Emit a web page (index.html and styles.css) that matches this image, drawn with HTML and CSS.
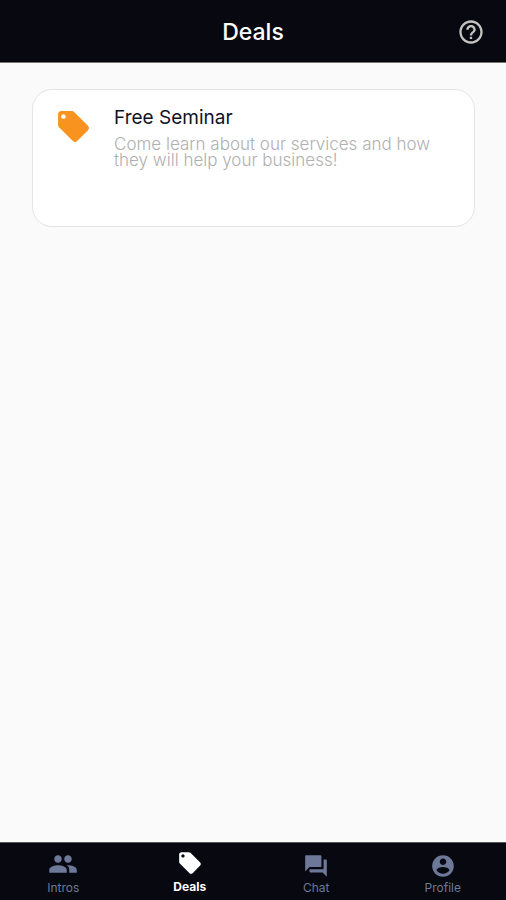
FILE: index.html
```html
<!DOCTYPE html>
<html lang="en">
<head>
<meta charset="utf-8">
<meta name="viewport" content="width=device-width, initial-scale=1">
<title>Deals</title>
<link rel="stylesheet" href="styles.css">
</head>
<body>
<header class="topbar">
  <h1 class="topbar-title">Deals</h1>
  <button class="help" type="button" aria-label="Help">
    <svg class="icon-help" viewBox="0 0 24 24" aria-hidden="true"><path d="M11 18h2v-2h-2v2zm1-16C6.48 2 2 6.48 2 12s4.480 10 10 10 10-4.480 10-10S17.520 2 12 2zm0 18c-4.410 0-8-3.590-8-8s3.590-8 8-8 8 3.590 8 8-3.590 8-8 8zm0-14c-2.210 0-4 1.790-4 4h2c0-1.100.9-2 2-2s2 .9 2 2c0 2-3 1.750-3 5h2c0-2.250 3-2.500 3-5 0-2.210-1.790-4-4-4z"/></svg>
  </button>
</header>
<main class="content">
  <article class="card">
    <svg class="icon-tag" viewBox="0 0 24 24" aria-hidden="true"><path d="M21.410 11.580l-9-9C12.050 2.220 11.550 2 11 2H4c-1.100 0-2 .9-2 2v7c0 .55.22 1.050.59 1.420l9 9c.36.36.86.58 1.410.58.55 0 1.050-.22 1.410-.59l7-7c.37-.36.59-.86.59-1.410 0-.55-.23-1.060-.59-1.420zM5.500 7C4.670 7 4 6.330 4 5.500S4.670 4 5.500 4 7 4.670 7 5.500 6.330 7 5.500 7z"/></svg>
    <div class="card-text">
      <h2 class="card-title">Free Seminar</h2>
      <p class="card-description">Come learn about our services and how they will help your business!</p>
    </div>
  </article>
</main>
<nav class="tabs" aria-label="Main">
  <a class="tab" href="#intros">
    <svg class="icon-people" viewBox="0 0 24 24" aria-hidden="true"><path d="M16 11c1.660 0 2.990-1.340 2.990-3S17.660 5 16 5s-3 1.340-3 3 1.340 3 3 3zm-8 0c1.660 0 2.990-1.340 2.990-3S9.660 5 8 5 5 6.340 5 8s1.340 3 3 3zm0 2c-2.330 0-7 1.170-7 3.500V19h14v-2.500c0-2.330-4.670-3.500-7-3.500zm8 0c-.29 0-.62.020-.97.050 1.160.84 1.970 1.970 1.970 3.450V19h6v-2.500c0-2.330-4.670-3.500-7-3.500z"/></svg>
    <span>Intros</span>
  </a>
  <a class="tab active" href="#deals" aria-current="page">
    <svg class="icon-tab" viewBox="0 0 24 24" aria-hidden="true"><path d="M21.410 11.580l-9-9C12.050 2.220 11.550 2 11 2H4c-1.100 0-2 .9-2 2v7c0 .55.22 1.050.59 1.420l9 9c.36.36.86.58 1.410.58.55 0 1.050-.22 1.410-.59l7-7c.37-.36.59-.86.59-1.410 0-.55-.23-1.060-.59-1.420zM5.500 7C4.670 7 4 6.330 4 5.500S4.670 4 5.500 4 7 4.670 7 5.500 6.330 7 5.500 7z"/></svg>
    <span>Deals</span>
  </a>
  <a class="tab" href="#chat">
    <svg class="icon-tab" viewBox="0 0 24 24" aria-hidden="true"><path d="M21 6h-2v9H6v2c0 .55.45 1 1 1h11l4 4V7c0-.55-.45-1-1-1zm-4 6V3c0-.55-.45-1-1-1H3c-.55 0-1 .45-1 1v14l4-4h10c.55 0 1-.45 1-1z"/></svg>
    <span>Chat</span>
  </a>
  <a class="tab" href="#profile">
    <svg class="icon-tab" viewBox="0 0 24 24" aria-hidden="true"><path d="M12 2C6.480 2 2 6.480 2 12s4.480 10 10 10 10-4.480 10-10S17.520 2 12 2zm0 3c1.660 0 3 1.340 3 3s-1.340 3-3 3-3-1.340-3-3 1.340-3 3-3zm0 14.200c-2.500 0-4.710-1.280-6-3.220.03-1.990 4-3.080 6-3.080 1.990 0 5.970 1.090 6 3.080-1.290 1.940-3.500 3.220-6 3.220z"/></svg>
    <span>Profile</span>
  </a>
</nav>
</body>
</html>
```
FILE: styles.css
```css
* {
  box-sizing: border-box;
}

body {
  display: flex;
  flex-direction: column;
  min-height: 100vh;
  margin: 0;
  background: #fafafa;
  font-family: Inter, "Liberation Sans", sans-serif;
}

svg {
  display: block;
  flex: none;
  fill: currentColor;
}

.topbar {
  display: grid;
  grid-template-columns: 1fr auto 1fr;
  align-items: center;
  padding: 17px 21px 15px;
  border-bottom: 1px solid #77746c;
  background: #070810;
  color: #fff;
}

.topbar-title {
  grid-column: 2;
  margin: 0;
  font-size: 23px;
  font-weight: 500;
  line-height: 30px;
}

.help {
  justify-self: end;
  padding: 0;
  border: 0;
  background: none;
  color: #c4c3c0;
}

.icon-help {
  width: 28px;
  height: 28px;
}

.content {
  flex: 1;
  padding: 26px 31px 26px 32px;
}

.card {
  display: flex;
  gap: 22px;
  min-height: 138px;
  padding: 18px 22px;
  border: 1px solid #e4e4e4;
  border-radius: 20px;
  background: #fff;
}

.icon-tag {
  width: 37px;
  height: 37px;
  color: #f7931e;
}

.card-title {
  margin: 0;
  color: #10121f;
  font-size: 19px;
  font-weight: 400;
  line-height: 20px;
}

.card-description {
  margin: 8px 0 0;
  color: #b0b0b0;
  font-size: 17px;
  font-weight: 300;
  line-height: 16px;
}

.tabs {
  display: grid;
  grid-template-columns: repeat(4, 1fr);
  height: 58px;
  border-top: 1px solid #55565c;
  background: #070810;
}

.tab {
  display: flex;
  flex-direction: column;
  align-items: center;
  justify-content: flex-end;
  gap: 2px;
  padding-bottom: 5px;
  color: #6e7899;
  font-size: 12px;
  line-height: 14px;
  text-decoration: none;
}

.tab.active {
  padding-bottom: 6px;
  gap: 4px;
  color: #fff;
  font-weight: 700;
}

.icon-people {
  width: 30px;
  height: 30px;
}

.icon-tab {
  width: 26px;
  height: 26px;
}
```
